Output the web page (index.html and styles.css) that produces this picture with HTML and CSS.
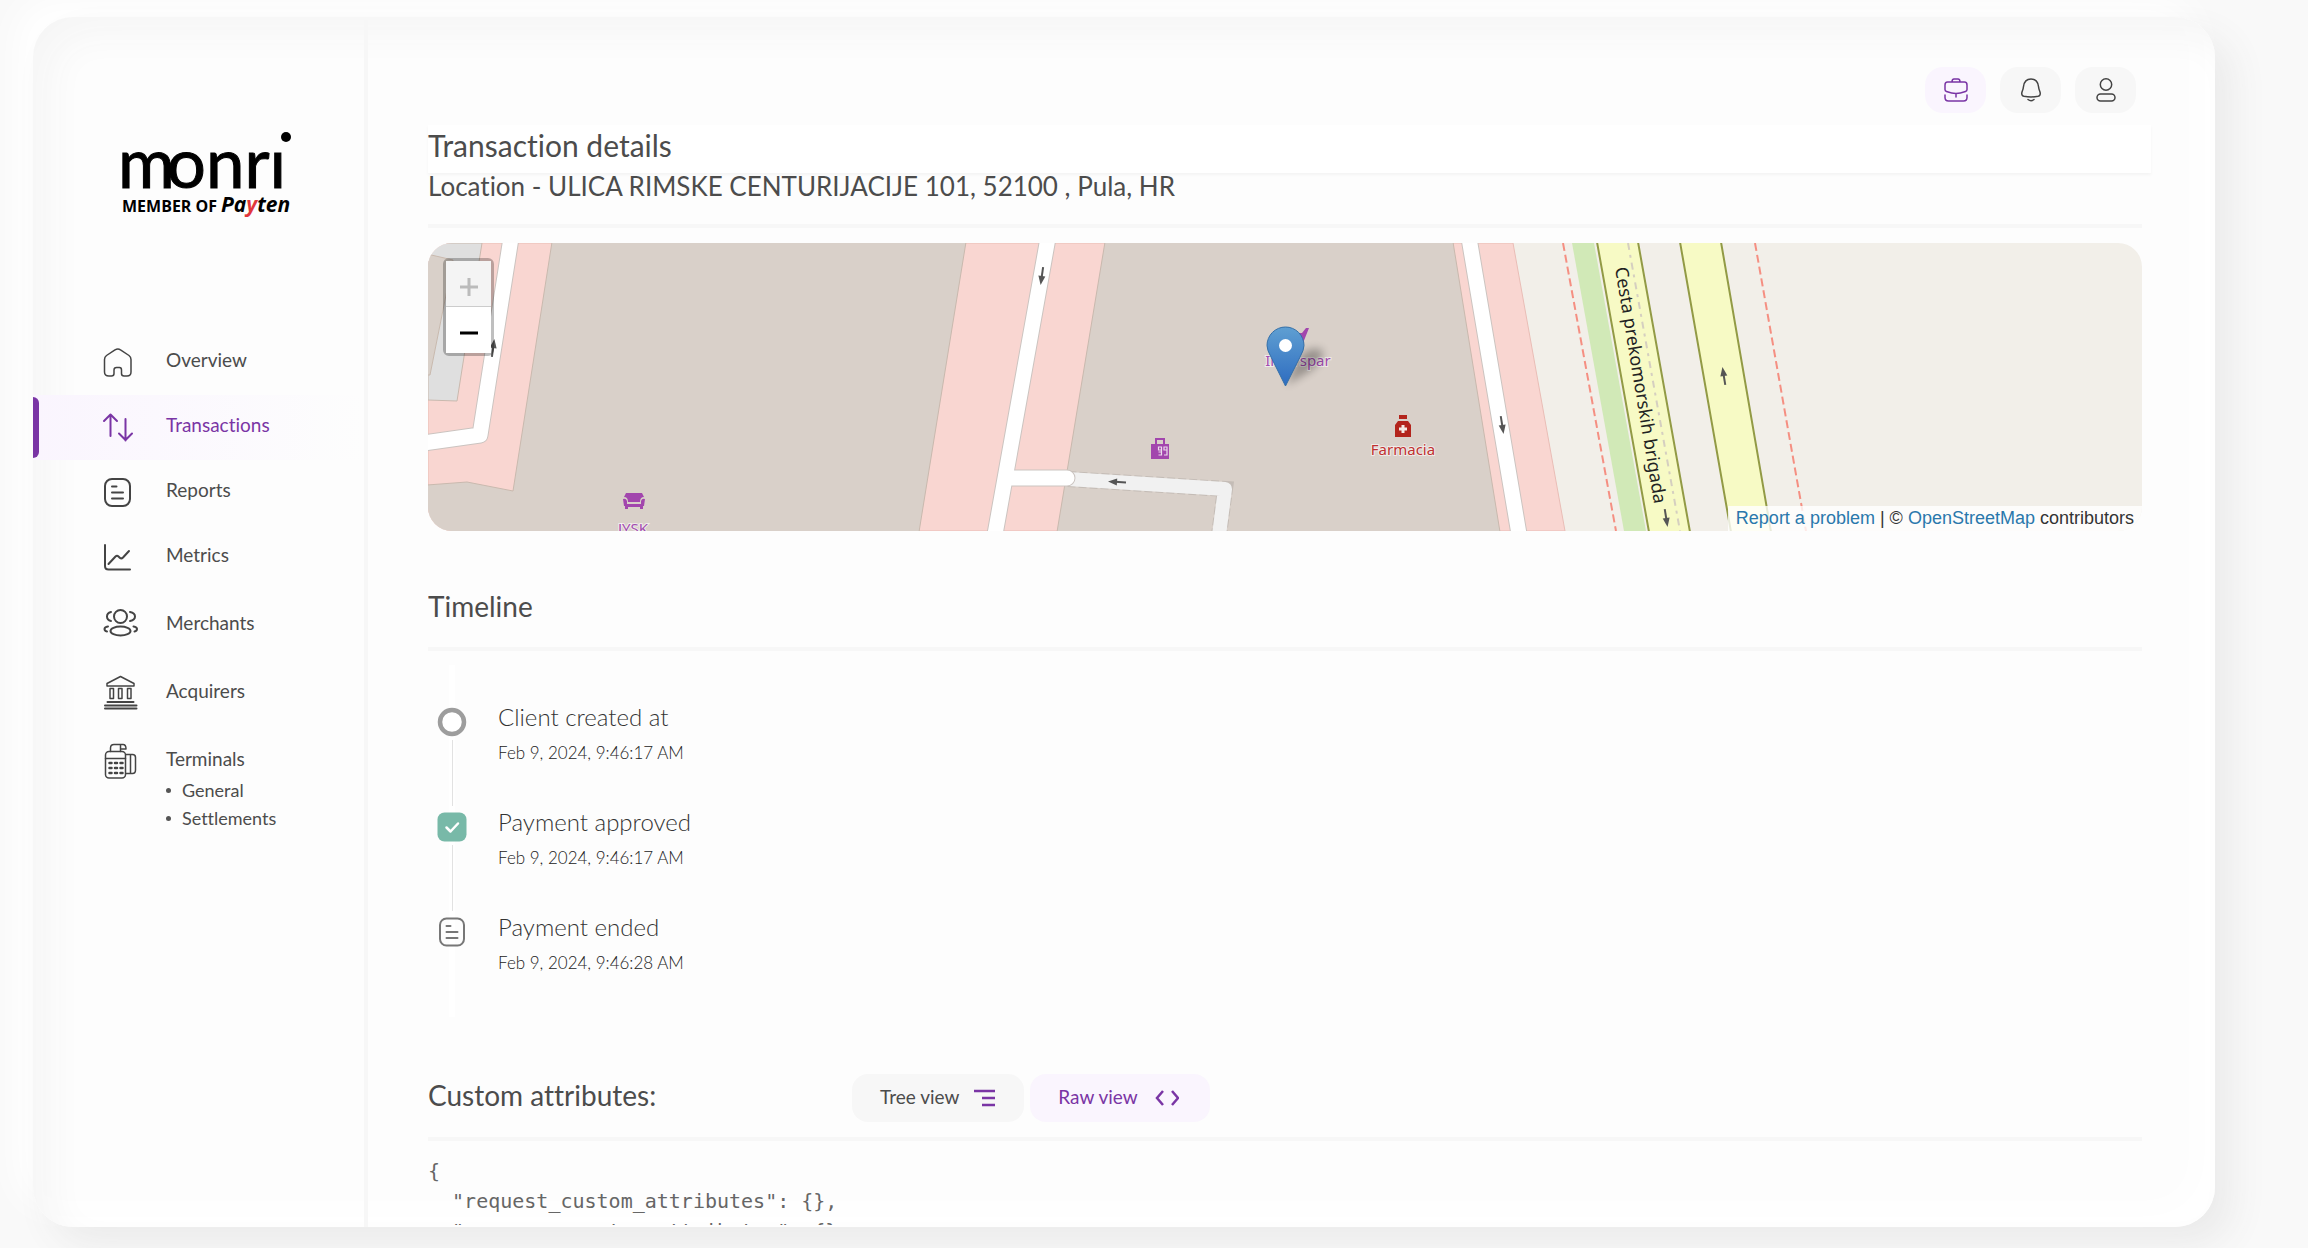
FILE: index.html
```html
<!DOCTYPE html>
<html lang="en">
<head>
<meta charset="utf-8">
<meta name="viewport" content="width=device-width, initial-scale=1">
<title>Transaction details</title>
<link rel="stylesheet" href="styles.css">
</head>
<body>
<div class="app">
  <aside class="sidebar">
    <svg class="logo" viewBox="0 0 172 90" role="img" aria-label="monri, member of Payten">
      <text class="logo-name" x="-4" y="58">m<tspan dx="-8">o</tspan>nrı</text>
      <circle cx="164" cy="7" r="5"/>
      <text class="logo-member" x="0" y="82">MEMBER OF</text>
      <text class="logo-payten" x="99" y="82">Pa<tspan class="logo-red">y</tspan>ten</text>
    </svg>
    <nav class="nav">
      <a class="nav-item" href="#overview">
        <svg class="icon" viewBox="0 0 36 36"><path d="M4.500 14.500Q4.500 12 6.500 10.500L15 4.800Q18 3 20.500 4.800L29 10.500Q31 12 31 14.500V27Q31 31 27 31H24Q21.500 31 21.500 28.500V25Q21.500 22.500 19.500 22.500H16.500Q14 22.500 14 25V28.500Q14 31 11.500 31H9Q4.500 31 4.500 27Z"/></svg>
        <span>Overview</span></a>
      <a class="nav-item nav-item-active" href="#transactions" aria-current="page">
        <svg class="icon icon-bold" viewBox="0 0 36 36"><path d="M10.500 26V4.500M4 11l6.500-6.500L17 11M25.500 9v21.500M19 23.500l6.500 6.500L32 23.500"/></svg>
        <span>Transactions</span></a>
      <a class="nav-item" href="#reports">
        <svg class="icon icon-bold" viewBox="0 0 36 36"><rect x="5" y="4" width="25" height="27" rx="7"/><path d="M12 11.500h4.500M12 17.500h11M12 23.500h11"/></svg>
        <span>Reports</span></a>
      <a class="nav-item" href="#metrics">
        <svg class="icon icon-bold" viewBox="0 0 36 36"><path d="M5 5v21Q5 29.500 8.500 29.500H30M8.500 24l7-7.500Q17 15 18.500 16.500L20 18Q21.500 19 23 17.500L29 11"/></svg>
        <span>Metrics</span></a>
      <a class="nav-item nav-item-tall" href="#merchants">
        <svg class="icon icon-bold" viewBox="0 0 36 36"><circle cx="20.500" cy="10.500" r="6.500"/><ellipse cx="20.500" cy="25" rx="10" ry="4.500"/><path d="M11 6q-4 1-4 4.500t4 4.500M30 6q5 1 5 4.500T30 15M8 20.500q-3.500.500-3.500 2.500T7 25.500M33.500 20.500q3.500.500 3.500 2.500T34.500 25.500"/></svg>
        <span>Merchants</span></a>
      <a class="nav-item nav-item-tall" href="#acquirers">
        <svg class="icon" viewBox="0 0 36 36"><path d="M7 9.500L20.500 2.500 34 9.500V12H7ZM10 14.500h3.500v10H10ZM18.500 14.500H22v10h-3.500ZM27.500 14.500H31v10h-3.500Z"/><path d="M7.500 28h26M5 31.500h31.500M5 34.500h31.500" stroke-width="2"/></svg>
        <span>Acquirers</span></a>
      <a class="nav-item nav-item-tall" href="#terminals">
        <svg class="icon" viewBox="0 0 36 36"><rect x="5.500" y="9.500" width="20" height="26.500" rx="3.500"/><path d="M5.500 16.500h20M10.500 9.500V6q0-3.500 3.500-3.500H23q3 0 3 4.500h-5.500V3.500M20.500 7v2.500M26 12.500h6.500q3 0 3 3v12.500q0 3.500-3 3.500H26M30.500 12.500v19"/><path d="M9.500 21h2M15 21h2M20.500 21h2M9.500 26h2M15 26h2M20.500 26h2M9.500 31h2M15 31h2M20.500 31h2" stroke-width="2.500"/></svg>
        <span>Terminals</span></a>
      <ul class="subnav">
        <li><a href="#general">General</a></li>
        <li><a href="#settlements">Settlements</a></li>
      </ul>
    </nav>
  </aside>

  <main class="main">
    <header class="topbar">
      <button class="tool tool-active" type="button" aria-label="Business">
        <svg viewBox="0 0 26 26"><path d="M9 5q0-3 2-3h4q2 0 2 3M4.500 5h17Q24 5 24 8v4.500Q24 14 22.500 14.500 17 16.500 13 16.500T3.500 14.500Q2 14 2 12.500V8Q2 5 4.500 5ZM13 16.500V20M2 18v2.500Q2 24 5.500 24h15q3.500 0 3.500-3.500V18"/></svg>
      </button>
      <button class="tool" type="button" aria-label="Notifications">
        <svg viewBox="0 0 26 26"><path d="M13 2q-6.500 0-7.500 7.500Q5.300 12 4 15q-1 3.500 2 4.300 7 1.400 14 0 3-.8 2-4.300-1.300-3-1.500-5.500Q19.500 2 13 2ZM10 22.500q3 2.500 6 0"/></svg>
      </button>
      <button class="tool" type="button" aria-label="Account">
        <svg viewBox="0 0 26 26"><circle cx="13" cy="7.500" r="5.700"/><rect x="4" y="17" width="18" height="7" rx="3.500"/></svg>
      </button>
    </header>

    <h1 class="page-title">Transaction details</h1>

    <div class="content">
      <section>
        <h2 class="section-title location-title">Location - ULICA RIMSKE CENTURIJACIJE 101, 52100 , Pula, HR</h2>
        <div class="map">
          <svg class="map-canvas" viewBox="428 243 1714 288" preserveAspectRatio="xMidYMid slice">
            <defs>
              <linearGradient id="pin" x1="0" y1="0" x2="0" y2="1"><stop offset="0" stop-color="#5f9fd2"/><stop offset="1" stop-color="#2e6cc0"/></linearGradient>
              <filter id="soft" x="-50%" y="-50%" width="200%" height="200%"><feGaussianBlur stdDeviation="4"/></filter>
              <g id="arrow"><path d="M0-8V3" stroke="#555" stroke-width="2" fill="none"/><path d="M-3.500 1L0 10 3.500 1Z" fill="#555"/></g>
            </defs>
            <rect x="428" y="243" width="1714" height="288" fill="#f2efe9"/>
            <path d="M428 243H1513L1565 531H428Z" fill="#f9d6d1" stroke="#e9bdb6"/>
            <g stroke="#c9b9ae">
              <path d="M428 243H482L457 401 428 400Z" fill="#dfdfdf"/>
              <path d="M427 254L453 260 430 375H427Z" fill="#d9d0c9"/>
              <path d="M552 242L513 491 467 482 427 485V532H919L966 242Z" fill="#d9d0c9"/>
              <path d="M1105 242H1453L1500 532H1057Z" fill="#d9d0c9"/>
            </g>
            <path d="M1068 479L1225 489 1219 535" fill="none" stroke="#c4bcb6" stroke-width="16" stroke-dasharray="8 3"/>
            <path d="M1068 479L1225 489 1219 535" fill="none" stroke="#f1f1f1" stroke-width="14" stroke-linejoin="round"/>
            <g fill="none" stroke-linecap="round" stroke-linejoin="round">
              <path d="M511 238L480 435 424 443M1048 238L994 540M1010 478H1067M1469 238L1520 540" stroke="#cbc4c0" stroke-width="17"/>
              <path d="M511 238L480 435 424 443M1048 238L994 540M1010 478H1067M1469 238L1520 540" stroke="#fff" stroke-width="15"/>
            </g>
            <path d="M1572 243H1594L1646 531H1624Z" fill="#d1e9b7"/>
            <path d="M1597 242H1638L1690 532H1649ZM1680 242H1721L1771 532H1731Z" fill="#f7fac5" stroke="#929a45" stroke-width="2"/>
            <path d="M1628 243L1680 531" stroke="#d5cfc0" stroke-width="2" stroke-dasharray="7 5 3 5"/>
            <path d="M1563 243L1616 531M1755 243L1806 531" stroke="#f58f82" stroke-width="2" stroke-dasharray="8 4"/>
            <use href="#arrow" transform="translate(1042 275) rotate(8)"/>
            <use href="#arrow" transform="translate(493 349) rotate(188)"/>
            <use href="#arrow" transform="translate(1118 482) rotate(93)"/>
            <use href="#arrow" transform="translate(1502 424) rotate(-9)"/>
            <use href="#arrow" transform="translate(1666 517) rotate(-9)"/>
            <use href="#arrow" transform="translate(1724 377) rotate(171)"/>
            <text class="street" transform="translate(1615 268) rotate(80.600)">Cesta prekomorskih brigada</text>
            <g fill="#a246ad">
              <path d="M626 493h16l2 4q-4 0-4 5h-12q0-5-4-5ZM623 499q3-1 4 2v3h14v-3q1-3 4-2l-1 7h-1v3h-3v-2h-12v2h-3v-3h-1Z"/>
              <path d="M1155 438h10v6h4v15h-18v-15h4ZM1157 440v4h6v-4Z" fill-rule="evenodd"/>
              <path d="M1290 333H1302L1306 328H1309L1303 343H1292Z"/>
            </g>
            <path d="M1158.500 452h3v-5h-3v3h3M1158.500 455h3v-3M1167 450h-3v-3h3v8h-3" fill="none" stroke="#ecdcec" stroke-width="1.200"/>
            <text class="poi" x="633" y="534">JYSK</text>
            <text class="poi" x="1298" y="366">Interspar</text>
            <text class="poi poi-red" x="1403" y="455">Farmacia</text>
            <path d="M1399 415h8v4h-8ZM1398 421h10l3 4v12h-16v-12Z" fill="#b3241c"/>
            <path d="M1403 425v8M1399 429h8" stroke="#f3e9e4" stroke-width="3"/>
            <path d="M1286 385L1296 362Q1306 345 1322 350 1326 358 1310 371Z" fill="#000" opacity=".3" filter="url(#soft)"/>
            <path d="M1285.500 386L1271 357Q1267 350 1267 345.500A18.500 18.500 0 0 1 1304 345.500Q1304 350 1300 357Z" fill="url(#pin)" stroke="#336fa8"/>
            <circle cx="1285.500" cy="345.500" r="6.500" fill="#fff"/>
          </svg>
          <div class="zoom">
            <button type="button" aria-label="Zoom in" disabled><svg viewBox="0 0 20 20"><path d="M10 1v18M1 10h18"/></svg></button>
            <button type="button" aria-label="Zoom out"><svg viewBox="0 0 20 20"><path d="M1 10h18"/></svg></button>
          </div>
          <p class="credit"><a href="#report">Report a problem</a> | © <a href="#osm">OpenStreetMap</a> contributors</p>
        </div>
      </section>

      <section>
        <h2 class="section-title timeline-title">Timeline</h2>
        <ol class="timeline">
          <li class="event">
            <div class="marker"><svg viewBox="0 0 30 30"><circle cx="15" cy="15" r="12" fill="#fff" stroke="#9d9d9d" stroke-width="4.500"/></svg></div>
            <div><h3>Client created at</h3><time datetime="2024-02-09T09:46:17">Feb 9, 2024, 9:46:17 AM</time></div>
          </li>
          <li class="event">
            <div class="marker"><svg viewBox="0 0 30 30"><rect x=".5" y=".5" width="29" height="29" rx="7" fill="#78b9a8"/><path d="M9.500 15.500l4 4 7.500-8" fill="none" stroke="#fff" stroke-width="2.500" stroke-linecap="round" stroke-linejoin="round"/></svg></div>
            <div><h3>Payment approved</h3><time datetime="2024-02-09T09:46:17">Feb 9, 2024, 9:46:17 AM</time></div>
          </li>
          <li class="event">
            <div class="marker"><svg viewBox="0 0 30 30"><g fill="none" stroke="#777" stroke-width="2" stroke-linecap="round"><rect x="3" y="1.500" width="24" height="27" rx="6.500"/><path d="M9.500 9h4M9.500 15h11M9.500 21h11"/></g></svg></div>
            <div><h3>Payment ended</h3><time datetime="2024-02-09T09:46:28">Feb 9, 2024, 9:46:28 AM</time></div>
          </li>
        </ol>
      </section>

      <section>
        <div class="attributes-head">
          <h2 class="section-title">Custom attributes:</h2>
          <div class="views">
            <button class="view" type="button">Tree view <svg viewBox="0 0 24 24"><path d="M2 6h21M10 13h13M10 20h13"/></svg></button>
            <button class="view view-active" type="button">Raw view <svg viewBox="0 0 24 24"><path d="M8 6l-6 7 6 7M17 6l6 7-6 7"/></svg></button>
          </div>
        </div>
<pre class="code">{
  "request_custom_attributes": {},
  "response_custom_attributes": {}
}</pre>
      </section>
    </div>
  </main>
</div>
</body>
</html>
```
FILE: styles.css
```css
* { box-sizing: border-box; }

body {
  margin: 0;
  height: 100vh;
  padding: 17px 93px 21px 33px;
  background: #f9f9f9;
  color: #4c4c4c;
  font-family: Lato, "Open Sans", sans-serif;
  font-size: 19px;
  font-variant-ligatures: none;
  overflow: hidden;
}

h1, h2, h3, p, ol, ul, pre { margin: 0; padding: 0; font-weight: 400; }
ol, ul { list-style: none; }
a { color: inherit; text-decoration: none; }
button { border: 0; padding: 0; font: inherit; color: inherit; cursor: pointer; }

.app {
  display: flex;
  height: 100%;
  overflow: hidden;
  border-radius: 40px;
  background: #fdfdfd;
  box-shadow:
    18px 18px 36px #ebebeb,
    -18px -18px 36px #fff,
    inset 18px 18px 36px #f6f6f6,
    inset -18px -18px 36px #fff;
}

/* Sidebar */
.sidebar {
  flex: none;
  width: 335px;
  padding-top: 113px;
  border-right: 4px solid #f7f7f7;
}
.logo { display: block; width: 172px; height: 90px; margin: 0 0 110px 89px; overflow: visible; }
.logo-name { font-size: 69px; stroke: #000; stroke-width: 1px; }
.logo-member { font: 700 16px "Open Sans", sans-serif; }
.logo-payten { font: italic 700 21px "Open Sans", sans-serif; }
.logo-red { fill: #e2373b; }

.nav-item {
  display: flex;
  align-items: center;
  gap: 30px;
  height: 65px;
  padding-left: 67px;
}
.nav-item-tall { height: 68px; }
.nav-item span { padding-bottom: 6px; }
.nav-item-tall span { padding-bottom: 3px; }
.nav-item-active {
  position: relative;
  color: #7a35a5;
  background: linear-gradient(90deg, #faf5fe, rgba(251, 248, 254, .8) 50%, rgba(253, 253, 253, 0));
}
.nav-item-active::before {
  content: "";
  position: absolute;
  inset: 2px auto 2px 0;
  width: 6px;
  border-radius: 0 6px 6px 0;
  background: #7a35a5;
}
.icon {
  width: 36px;
  height: 36px;
  fill: none;
  overflow: visible;
  stroke: #444;
  stroke-width: 1.5;
  stroke-linecap: round;
  stroke-linejoin: round;
}
.icon-bold { stroke-width: 2; }
.nav-item-active .icon { stroke: #7a35a5; }

.subnav { margin-top: -18px; padding-left: 133px; font-size: 18px; line-height: 28px; }
.subnav a { display: flex; align-items: center; gap: 11px; }
.subnav a::before { content: ""; width: 5px; height: 5px; border-radius: 50%; background: #555; }

/* Main column */
.main {
  flex: 1;
  min-width: 0;
  display: flex;
  flex-direction: column;
  padding: 0 64px 2px 60px;
}
.topbar {
  flex: none;
  display: flex;
  justify-content: flex-end;
  gap: 14px;
  padding: 50px 15px 12px 0;
}
.tool {
  display: grid;
  place-items: center;
  width: 61px;
  height: 46px;
  border-radius: 18px;
  background: #f7f7f7;
}
.tool-active { background: #faf5fe; }
.tool svg {
  width: 26px;
  height: 26px;
  fill: none;
  stroke: #444;
  stroke-width: 1.5;
  stroke-linecap: round;
  stroke-linejoin: round;
}
.tool-active svg { stroke: #7a35a5; }

.page-title {
  flex: none;
  position: relative;
  height: 48px;
  background: #fff;
  box-shadow: 0 2px 3px rgba(0, 0, 0, .04);
  font-size: 30px;
  line-height: 40px;
}
.content {
  flex: 1;
  min-height: 0;
  overflow: hidden;
  padding-right: 9px;
}
.section-title { font-size: 28px; line-height: 36px; }
.location-title {
  font-size: 26px;
  line-height: 26px;
  padding-bottom: 25px;
  border-bottom: 4px solid #f7f7f7;
}
.timeline-title {
  margin-top: 57px;
  padding-bottom: 23px;
  border-bottom: 4px solid #f7f7f7;
}

/* Map */
.map {
  position: relative;
  height: 288px;
  margin-top: 15px;
  border-radius: 24px;
  overflow: hidden;
}
.map-canvas { display: block; width: 100%; height: 100%; }
.street { font: 18px "Noto Sans", sans-serif; fill: #222; }
.poi {
  font: 15px "Noto Sans", sans-serif;
  fill: #a34db0;
  text-anchor: middle;
  stroke: rgba(255, 255, 255, .6);
  stroke-width: 2px;
  paint-order: stroke;
}
.poi-red { fill: #c03030; }
.zoom {
  position: absolute;
  top: 15px;
  left: 15px;
  border: 3px solid rgba(0, 0, 0, .25);
  border-radius: 6px;
}
.zoom button {
  display: grid;
  place-items: center;
  width: 45px;
  height: 46px;
  padding-top: 6px;
  background: #fff;
}
.zoom button:disabled { background: #f4f4f4; border-bottom: 1px solid #ccc; }
.zoom svg { width: 20px; height: 20px; fill: none; stroke: #000; stroke-width: 3; }
.zoom button:disabled svg { stroke: #bbb; }
.credit {
  position: absolute;
  right: 0;
  bottom: 0;
  padding: 0 8px;
  background: rgba(255, 255, 255, .8);
  color: #333;
  font: 18px/25px "Liberation Sans", Arial, sans-serif;
}
.credit a { color: #2a78ac; }

/* Timeline */
.timeline {
  margin-top: 14px;
  padding: 36px 0 1px 9px;
  background: linear-gradient(#fff, #fff) 21px 0 / 6px 100% no-repeat;
}
.event { display: flex; gap: 31px; height: 105px; }
.marker {
  display: flex;
  flex-direction: column;
  align-items: center;
  gap: 3px;
  padding-top: 6px;
}
.marker svg { flex: none; width: 30px; height: 30px; }
.event:not(:last-child) .marker::after { content: ""; flex: 1; width: 1px; background: #e2e2e2; }
.event h3 { font-size: 24px; font-weight: 300; line-height: 32px; color: #333; }
.event time { display: block; margin-top: 8px; font-size: 17px; font-weight: 300; line-height: 24px; color: #222; }

/* Custom attributes */
.attributes-head {
  display: grid;
  grid-template-columns: 424px 1fr;
  margin-top: 57px;
  padding-bottom: 15px;
  border-bottom: 4px solid #f7f7f7;
}
.attributes-head .section-title { line-height: 42px; }
.views { display: flex; gap: 6px; }
.view {
  display: flex;
  align-items: center;
  gap: 13px;
  height: 48px;
  padding: 0 28px 3px;
  border-radius: 16px;
  background: #f7f7f7;
}
.view-active { gap: 17px; padding-right: 31px; background: #faf5fe; color: #7a35a5; }
.view svg { width: 24px; height: 24px; fill: none; stroke: #7a35a5; stroke-width: 2.5; }
.code {
  margin-top: 15px;
  color: #666;
  font: 20px/30px "DejaVu Sans Mono", monospace;
}
```
